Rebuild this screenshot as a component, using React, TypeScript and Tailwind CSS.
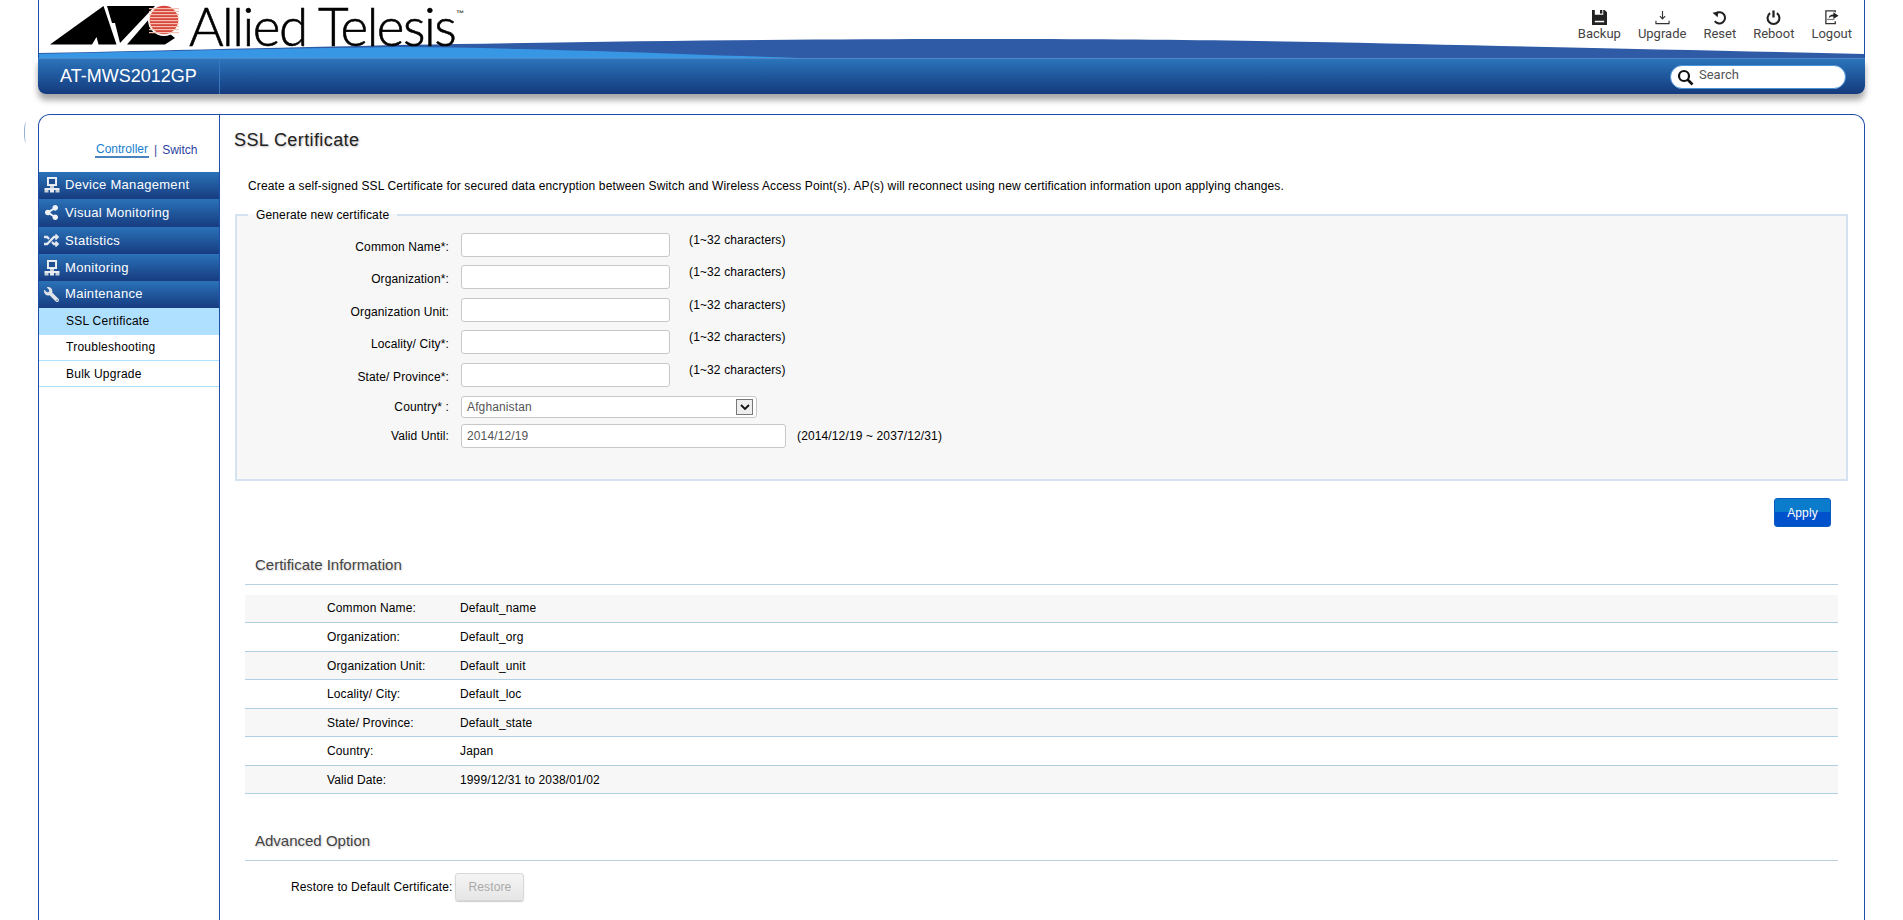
import React from "react";
import { FaShareAlt, FaRandom, FaWrench } from "react-icons/fa";

const Pc = () => (
  <svg width="16" height="16" viewBox="0 0 16 16" fill="none">
    <rect x="3.5" y="0.5" width="9" height="8" fill="#dfe6ee" stroke="#eef2f6" />
    <rect x="5" y="2" width="6" height="5" fill="#1f4f91" />
    <rect x="6" y="9" width="4" height="3" fill="#c4ccd6" />
    <rect x="0.5" y="11" width="15" height="2" fill="#e8ecf1" />
    <rect x="0.5" y="13" width="4" height="2.5" fill="#c8d0da" />
    <rect x="6" y="13" width="4" height="2.5" fill="#e8ecf1" />
    <rect x="11.5" y="13" width="4" height="2.5" fill="#c8d0da" />
  </svg>
);

const Logo = () => (
  <svg width="134" height="42" viewBox="50 4 134 42" className="mt-[4px] shrink-0">
    <polygon points="50,44.5 103.5,6 116.5,44.5 98.5,44.5 96.5,37 92,44.5" fill="#000" />
    <polygon points="107,6 155,6 120,43 115,23 112,23" fill="#000" />
    <polygon points="127,44.5 150,18 175,38 165,44.5" fill="#000" />
    <circle cx="164" cy="20" r="16" fill="#fff" />
    <circle cx="164" cy="20" r="14.3" fill="#d8473d" />
    {[8, 11, 14, 17, 20, 23, 26, 29, 32].map((y) => (
      <rect key={y} x="149" y={y} width="30" height="1.2" fill="#f4c0b0" />
    ))}
  </svg>
);

const ToolIcon = ({ name }: { name: string }) => {
  if (name === "Backup")
    return (
      <svg width="15" height="15" viewBox="0 0 16 16">
        <path d="M0 0h3v5h9V0h1.5L16 2.5V16H0Z" fill="#222" />
        <rect x="8.5" y="0" width="2.5" height="3.8" fill="#222" />
        <rect x="3" y="11.5" width="10" height="1.6" fill="#fff" />
      </svg>
    );
  if (name === "Upgrade")
    return (
      <svg width="15" height="15" viewBox="0 0 16 16" fill="none" stroke="#333" strokeWidth="1.2">
        <path d="M8 1v8M5.2 6.5 8 9.5l2.8-3" />
        <path d="M1 11.5v3h14v-3" />
      </svg>
    );
  if (name === "Reset")
    return (
      <svg width="15" height="15" viewBox="0 0 16 16" fill="none">
        <path d="M4.2 3.6A6 6 0 1 1 3 11.8" stroke="#222" strokeWidth="2.2" />
        <path d="M0.5 2.8 6.8 1.5 6 7.8Z" fill="#222" />
      </svg>
    );
  if (name === "Reboot")
    return (
      <svg width="15" height="15" viewBox="0 0 16 16" fill="none" stroke="#222" strokeWidth="2.2">
        <path d="M4.4 3.4a6.3 6.3 0 1 0 7.2 0" />
        <path d="M8 0.5v7.5" strokeWidth="2.4" />
      </svg>
    );
  return (
    <svg width="15" height="15" viewBox="0 0 16 16" fill="none">
      <path d="M12 2.5V1H2v13.5h10V12" stroke="#333" strokeWidth="1.4" />
      <rect x="3" y="9.5" width="8" height="1.2" fill="#777" />
      <path d="M5 9c0-3 2-4.2 5-4.2V2.5L15.5 6 10 9.5V7C8 7 6 7.3 5 9Z" fill="#222" />
    </svg>
  );
};

const tools = ["Backup", "Upgrade", "Reset", "Reboot", "Logout"];

const menu = [
  { label: "Device Management", icon: <Pc />, h: "h-[27px] pb-px" },
  { label: "Visual Monitoring", icon: <FaShareAlt size={15} color="#eef2f6" />, h: "h-[28px] pb-px" },
  { label: "Statistics", icon: <FaRandom size={15} color="#e4e9ef" />, h: "h-[27px]" },
  { label: "Monitoring", icon: <Pc />, h: "h-[27px]" },
  { label: "Maintenance", icon: <FaWrench size={15} color="#dfe3e8" className="-scale-x-100" />, h: "h-[27px] pb-px" },
];

const formRows = ["Common Name*:", "Organization*:", "Organization Unit:", "Locality/ City*:", "State/ Province*:"];

const info = [
  ["Common Name:", "Default_name", "h-[28px]"],
  ["Organization:", "Default_org", "h-[29px]"],
  ["Organization Unit:", "Default_unit", "h-[28px]"],
  ["Locality/ City:", "Default_loc", "h-[29px]"],
  ["State/ Province:", "Default_state", "h-[28px]"],
  ["Country:", "Japan", "h-[29px]"],
  ["Valid Date:", "1999/12/31 to 2038/01/02", "h-[28px]"],
];

export default function App() {
  return (
    <div className="relative h-[920px] overflow-hidden bg-white font-['Liberation_Sans',Arial,sans-serif] text-[12px] tracking-[0.13px] text-black">
      <div className="absolute left-[24px] top-[122px] h-[21px] w-[4px] rounded-l-[100%] border-l border-[#8fabd0]" />

      <header className="ml-[38px] w-[1827px]">
        <div className="relative flex h-[58px] justify-between border-x border-[#1f4ea8]">
          <svg className="absolute left-0 top-0" width="1825" height="58" viewBox="0 0 1825 58">
            <path d="M0 53C150 50 300 46 417 44C600 41 780 39 922 39C1150 39 1300 42 1461 46C1600 49 1720 51.5 1825 54V58H0Z" fill="#2f5aa6" />
            <path d="M0 54C130 51 260 48 361 47C400 47 440 48 481 49C540 50.5 590 52 641 54C680 55.5 720 56.5 761 58H0Z" fill="#3897e4" />
          </svg>
          <div className="relative ml-[11px] flex items-start">
            <Logo />
            <span className="ml-[5px] font-['Lato',sans-serif] text-[53px] font-light leading-[52px] tracking-[-1.5px] text-black [-webkit-text-stroke:0.6px_black]">
              Allied Telesis
            </span>
            <span className="ml-px mt-[9px] text-[8px] font-bold leading-[10px] text-[#444]">™</span>
          </div>
          <div className="relative mr-[12px] flex gap-[17px] pt-[10px] font-['Roboto',sans-serif] text-[13px] tracking-normal text-[#444]">
            {tools.map((t) => (
              <div key={t} className="flex flex-col items-center">
                <ToolIcon name={t} />
                <span className="mt-[1px] leading-[16px]">{t}</span>
              </div>
            ))}
          </div>
        </div>
        <div className="flex h-[36px] items-center justify-between rounded-b-[8px] border-t border-[#4f86c4] bg-gradient-to-b from-[#2b74bb] to-[#153a7d] shadow-[0_6px_6px_rgba(0,0,0,0.35)]">
          <div className="flex h-full w-[182px] items-center border-r border-[#3a78bd] pl-[22px] text-[18px] tracking-normal text-white">
            AT-MWS2012GP
          </div>
          <div className="mr-[19px] flex h-[24px] w-[176px] items-center rounded-full border border-[#4a94d8] bg-white pl-[6px] font-['Roboto',sans-serif] text-[13px] tracking-normal text-[#555]">
            <svg width="17" height="17" viewBox="0 0 17 17" fill="none" stroke="#111" className="mt-[2px]">
              <circle cx="7" cy="7" r="5" strokeWidth="2.2" />
              <path d="M10.5 10.5 15.5 15.5" strokeWidth="2.6" />
            </svg>
            <span className="ml-[5px] -mt-[4px]">Search</span>
          </div>
        </div>
      </header>

      <div className="ml-[38px] mt-[20px] flex h-[900px] w-[1827px] rounded-t-[12px] border-x border-t border-[#1f4ea8]">
        <aside className="w-[181px] shrink-0 border-r border-[#1f4ea8]">
          <div className="flex h-[57px] items-start pl-[56px] pt-[27px] leading-[16px] tracking-normal">
            <span className="border-b-2 border-[#4a82be] px-px leading-[14px] text-[#1a80d0]">Controller</span>
            <span className="mx-[5px] text-[#3a4aa0]">|</span>
            <span className="text-[#2a3f9e]">Switch</span>
          </div>
          {menu.map((m) => (
            <div
              key={m.label}
              className={`flex ${m.h} items-center bg-gradient-to-b from-[#2b72b8] to-[#173c80] pl-[5px] text-[13px] tracking-[0.3px] text-white`}
            >
              <span className="flex w-[21px] shrink-0 items-center">{m.icon}</span>
              {m.label}
            </div>
          ))}
          <div className="flex h-[27px] items-center bg-[#b0e0ff] pb-px pl-[27px] tracking-[0.25px]">SSL Certificate</div>
          <div className="flex h-[26px] items-center border-b border-[#b0e0ff] pb-px pl-[27px] tracking-[0.25px]">Troubleshooting</div>
          <div className="flex h-[26px] items-center border-b border-[#b0e0ff] pl-[27px] tracking-[0.25px]">Bulk Upgrade</div>
        </aside>

        <main className="min-w-0 flex-1">
          <h1 className="ml-[14px] mt-[15px] text-[18px] leading-[20px] tracking-[0.4px] text-[#222] [text-shadow:1px_1px_2px_rgba(0,0,0,0.25)]">
            SSL Certificate
          </h1>
          <p className="ml-[28px] mt-[28px] leading-[16px]">
            Create a self-signed SSL Certificate for secured data encryption between Switch and Wireless Access Point(s). AP(s) will reconnect using new certification information upon applying changes.
          </p>

          <fieldset className="ml-[15px] mt-[13px] box-border h-[274px] w-[1613px] border-2 border-[#d4e3ef] bg-[#f7f7f7] pt-[10px]">
            <legend className="ml-[11px] px-[8px] leading-[16px]">Generate new certificate</legend>
            {formRows.map((r) => (
              <div key={r} className="flex h-[32.4px] items-start">
                <label className="mt-[6px] w-[212px] text-right leading-[16px]">{r}</label>
                <div className="ml-[12px] h-[24px] w-[209px] rounded-[3px] border border-[#c8c8c8] bg-white" />
                <span className="-mt-px ml-[19px] leading-[16px]">(1~32 characters)</span>
              </div>
            ))}
            <div className="mt-[1px] flex h-[28px] items-start">
              <label className="mt-[3px] w-[212px] text-right leading-[16px]">Country* :</label>
              <div className="ml-[12px] flex h-[22px] w-[296px] items-center justify-between rounded-[3px] border border-[#c8c8c8] bg-white pl-[5px] pr-[3px] text-[#555]">
                Afghanistan
                <span className="flex h-[16px] w-[17px] items-center justify-center border border-[#777] bg-[#eee]">
                  <svg width="10" height="8" viewBox="0 0 10 8" fill="none" stroke="#111" strokeWidth="1.8">
                    <path d="M1 2 5 6l4-4" />
                  </svg>
                </span>
              </div>
            </div>
            <div className="flex items-start">
              <label className="mt-[4px] w-[212px] text-right leading-[16px]">Valid Until:</label>
              <div className="ml-[12px] flex h-[24px] w-[325px] items-center rounded-[3px] border border-[#c8c8c8] bg-white pl-[5px] text-[#555]">
                2014/12/19
              </div>
              <span className="ml-[11px] mt-[4px] leading-[16px]">(2014/12/19 ~ 2037/12/31)</span>
            </div>
          </fieldset>

          <div className="mt-[17px] flex justify-end pr-[33px]">
            <button className="h-[29px] w-[57px] rounded-[3px] border border-[#0a5cc0] bg-[linear-gradient(#0a7ccb_0_50%,#0052cc_50%_100%)] text-white">
              Apply
            </button>
          </div>

          <div className="ml-[25px] mr-[26px]">
            <h2 className="mt-[28px] h-[30px] border-b border-[#b8d0e0] pl-[10px] text-[15px] leading-[20px] tracking-normal text-[#444] [text-shadow:1px_1px_2px_rgba(0,0,0,0.2)]">
              Certificate Information
            </h2>
            <div className="mt-[10px]">
              {info.map(([k, v, h], i) => (
                <div
                  key={k}
                  className={`flex ${h} items-center border-b border-[#b0cfe2] pl-[82px] ${i === 0 ? "pb-[2px]" : ""} ${i % 2 === 0 ? "bg-[#f7f7f7]" : "bg-white"}`}
                >
                  <span className="w-[133px]">{k}</span>
                  <span>{v}</span>
                </div>
              ))}
            </div>
            <h2 className="mt-[37px] h-[30px] border-b border-[#b8d0e0] pl-[10px] text-[15px] leading-[20px] tracking-normal text-[#444] [text-shadow:1px_1px_2px_rgba(0,0,0,0.2)]">
              Advanced Option
            </h2>
            <div className="mt-[12px] flex items-center pl-[46px]">
              <span>Restore to Default Certificate:</span>
              <button className="ml-[3px] h-[28px] w-[69px] rounded-[3px] border border-[#d8d8d8] bg-gradient-to-b from-[#f4f4f4] to-[#e6e6e6] text-[#aaa] shadow-[0_1px_1px_rgba(0,0,0,0.2)]">
                Restore
              </button>
            </div>
          </div>
        </main>
      </div>
    </div>
  );
}
